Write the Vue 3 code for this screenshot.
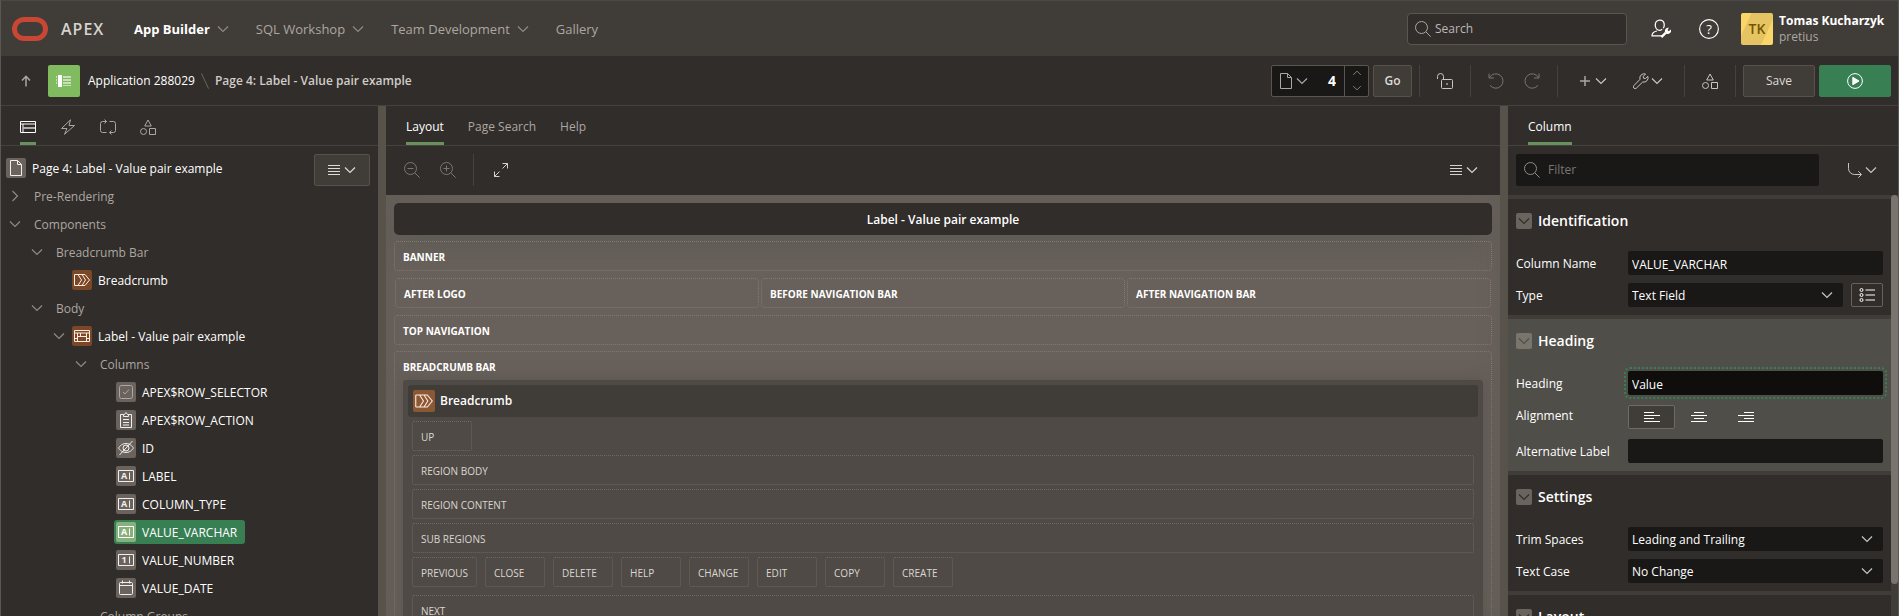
<script setup>
import { h, ref } from 'vue'

const shapes = {
  chevDown: '<path d="M3 5.500 8 10.500 13 5.500" stroke-width="1.200"/>',
  chevRight: '<path d="M5.500 3 10.500 8 5.500 13" stroke-width="1.200"/>',
  chevUp: '<path d="M3 10.500 8 5.500 13 10.500" stroke-width="1.200"/>',
  arrowUp: '<path d="M8 13.500V3.500M4 7.500l4-4.200 4 4.200" stroke-width="1.500"/>',
  layout: '<path d="M.5 2.500h15v11H.5zM.5 5h15M3 5v8.500"/><path d="M3.500 8h12v2h-12z" fill="currentColor" stroke="none" opacity=".6"/>',
  bolt: '<path d="M10.500.8 1.500 9.500h5.500L4.500 15.300 14.500 6.500H9z"/>',
  cycle: '<path d="M6.500 13.500h-4a2 2 0 0 1-2-2v-7a2 2 0 0 1 2-2h4M4.500.5l2 2-2 2M9.500 2.500h4a2 2 0 0 1 2 2v7a2 2 0 0 1-2 2h-4M11.500 11.500l-2 2 2 2"/>',
  shapes: '<path d="M8 1l3.300 6H4.700zM9.500 9.500h6v6h-6z"/><circle cx="3.500" cy="12.500" r="3"/>',
  search: '<circle cx="6.500" cy="6.500" r="6"/><path d="M11 11l4.700 4.700"/>',
  zoomOut: '<circle cx="6.500" cy="6.500" r="6"/><path d="M11 11l4.700 4.700M3.500 6.500h6"/>',
  zoomIn: '<circle cx="6.500" cy="6.500" r="6"/><path d="M11 11l4.700 4.700M3.500 6.500h6M6.500 3.500v6"/>',
  expand: '<path d="M9.500 1.500h5v5M14.500 1.500l-5 5M6.500 9.500l-5 5M1.500 9.500v5h5"/>',
  lines: '<path d="M2 3.500h12M2 6.500h12M2 9.500h12M2 12.500h12"/>',
  file: '<path d="M2.500.5h7l4 4v11h-11zM9.500.5v4h4"/>',
  lock: '<path d="M.5 6V3.500a3 3 0 0 1 6 0V6.500"/><rect x="4.500" y="6.500" width="11" height="9" rx="1"/><path d="M9.300 11h1.500" stroke-width="1.500"/>',
  undo: '<path d="M1 .5v4.500h5M1.500 4.500A7.200 7.200 0 1 1 2 12.300"/>',
  redo: '<path d="M15 .5v4.500h-5M14.500 4.500A7.200 7.200 0 1 0 14 12.300"/>',
  plus: '<path d="M8 3v10M3 8h10" stroke-width="1.500"/>',
  wrench: '<path d="M14.800 3.300l-2.300 2.200-1.900-.2-.3-2L12.600 1A4.300 4.300 0 0 0 7 6.300L.9 12.600a1.700 1.700 0 0 0 2.500 2.500L9.700 9a4.300 4.300 0 0 0 5.100-5.700z"/>',
  turn: '<path d="M1.500 1v5.500a6 6 0 0 0 6 6h6.500M11.300 9.300l3.200 3.200-3.200 3.200"/>',
  list: '<circle cx="2.500" cy="3" r="1.500"/><circle cx="2.500" cy="8" r="1.500"/><circle cx="2.500" cy="13" r="1.500"/><path d="M6.500 3H16M6.500 8H16M6.500 13H16"/>',
  left: '<path d="M0 3.500h10M0 6.500h16M0 9.500h10M0 12.500h16"/>',
  center: '<path d="M3 3.500h10M0 6.500h16M3 9.500h10M0 12.500h16"/>',
  right: '<path d="M6 3.500h10M0 6.500h16M6 9.500h10M0 12.500h16"/>',
  play: '<circle cx="8" cy="8" r="7.400"/><path d="M5.800 4.300v7.400L12 8z" fill="currentColor"/>',
  help: '<circle cx="8" cy="8" r="7.500" stroke-width=".9"/><text x="8" y="11.800" text-anchor="middle" fill="currentColor" stroke="none" font-size="10.500">?</text>',
  admin: '<path d="M9 13.500H.8c0-2.300 1.200-3.400 4-3.900M9 8.200c-.6.500-1.300.8-2 .8-2.300 0-3.600-2-3.600-4.300S4.900.8 7 .8s3.600 1.600 3.600 3.900c0 1-.3 2-.8 2.700"/><path d="M8.300 14.500l3.400-3.400" stroke-width="1.900"/><path d="M15.900 8.300l-1.700 1.400-1-.9L14.400 7a2.800 2.800 0 0 0-3 4l1 .9a2.800 2.800 0 0 0 3.500-3.600z" fill="currentColor" stroke="none"/>',
}
const treeShapes = {
  page: '<path d="M4.500 2.500h7l4 4v11h-11zM11.500 2.500v4h4"/>',
  crumb: '<path d="M2.500 4.500v11M2.500 4.500h10.500l4.500 5.500-4.500 5.500H2.500M6 4.500l3.500 5.500L6 15.500M10 4.500l3.500 5.500-3.500 5.500"/>',
  grid: '<path d="M2.500 4.500h15v11h-15zM2.500 7h15M5.500 7v8.500M5.500 10.500h9M14.500 7v8.500M8.500 7v3.500M2.500 12.500h3M14.500 12.500h3"/>',
  check: '<rect x="3.500" y="3.500" width="13" height="13" rx="2"/><path d="M7 10l2 2 4-4.500"/>',
  clip: '<path d="M7.500 4.500h-3v13h11v-13h-3M7.500 6.500v-2h1l1.500-2 1.500 2h1v2zM7 9.500h6M7 12.500h6M7 15h6"/>',
  hidden: '<path d="M2.500 10S5 5.500 10 5.500 17.500 10 17.500 10 15 14.500 10 14.500 2.500 10 2.500 10zM3.500 17 16.500 3"/><circle cx="10" cy="10" r="3"/>',
  text: '<path d="M2.500 4.500h15v11h-15zM13.500 6.500v7"/><text x="8" y="13.200" text-anchor="middle" fill="currentColor" stroke="none" font-size="9" font-weight="700">A</text>',
  number: '<path d="M2.500 4.500h15v11h-15zM13.500 6.500v7"/><text x="8" y="13.200" text-anchor="middle" fill="currentColor" stroke="none" font-size="9" font-weight="700">1</text>',
  date: '<rect x="3.500" y="4.500" width="13" height="12" rx="1"/><path d="M3.500 7.500h13M6.500 2.500v3M13.500 2.500v3"/>',
}
const svg = (box, html) => h('svg', {
  viewBox: `0 0 ${box} ${box}`, fill: 'none', stroke: 'currentColor', 'aria-hidden': 'true', innerHTML: html,
})
const Icon = (props) => svg(16, shapes[props.name])
Icon.props = ['name']
const TreeIcon = (props) => svg(20, treeShapes[props.name])
TreeIcon.props = ['name']

const nav = [
  { label: 'App Builder', menu: true, current: true },
  { label: 'SQL Workshop', menu: true },
  { label: 'Team Development', menu: true },
  { label: 'Gallery' },
]
const leftTabs = [
  { icon: 'layout', label: 'Rendering', current: true },
  { icon: 'bolt', label: 'Dynamic Actions' },
  { icon: 'cycle', label: 'Processing' },
  { icon: 'shapes', label: 'Shared Components' },
]
const tree = [
  { level: 1, label: 'Pre-Rendering', chev: 'chevRight' },
  { level: 1, label: 'Components', chev: 'chevDown' },
  { level: 2, label: 'Breadcrumb Bar', chev: 'chevDown' },
  { level: 3, label: 'Breadcrumb', icon: 'crumb', tone: 'brown' },
  { level: 2, label: 'Body', chev: 'chevDown' },
  { level: 3, label: 'Label - Value pair example', chev: 'chevDown', icon: 'grid', tone: 'brown' },
  { level: 4, label: 'Columns', chev: 'chevDown' },
  { level: 5, label: 'APEX$ROW_SELECTOR', icon: 'check', tone: 'dim' },
  { level: 5, label: 'APEX$ROW_ACTION', icon: 'clip' },
  { level: 5, label: 'ID', icon: 'hidden' },
  { level: 5, label: 'LABEL', icon: 'text' },
  { level: 5, label: 'COLUMN_TYPE', icon: 'text' },
  { level: 5, label: 'VALUE_VARCHAR', icon: 'text', selected: true },
  { level: 5, label: 'VALUE_NUMBER', icon: 'number' },
  { level: 5, label: 'VALUE_DATE', icon: 'date' },
  { level: 4, label: 'Column Groups' },
]
const bodySlots = ['REGION BODY', 'REGION CONTENT', 'SUB REGIONS']
const buttonSlots = ['PREVIOUS', 'CLOSE', 'DELETE', 'HELP', 'CHANGE', 'EDIT', 'COPY', 'CREATE']

const pageNo = ref('4')
const columnName = ref('VALUE_VARCHAR')
const heading = ref('Value')
const altLabel = ref('')
const align = ref('left')
</script>

<template>
  <div class="app">
    <header class="header">
      <a href="#" class="brand"><span class="logo"></span><span>APEX</span></a>
      <nav class="nav">
        <a v-for="n in nav" :key="n.label" href="#" :class="{ current: n.current }">
          {{ n.label }}<Icon v-if="n.menu" name="chevDown" class="i16" />
        </a>
      </nav>
      <label class="search">
        <Icon name="search" class="i16" />
        <input type="search" placeholder="Search" aria-label="Search">
      </label>
      <button class="plain admin" aria-label="Administration"><Icon name="admin" class="i20" /></button>
      <button class="plain help" aria-label="Help"><Icon name="help" class="i20" /></button>
      <button class="plain user">
        <span class="avatar">TK</span>
        <span class="who"><b>Tomas Kucharzyk</b><span>pretius</span></span>
      </button>
    </header>

    <div class="toolbar">
      <button class="plain up" aria-label="Up"><Icon name="arrowUp" class="i16" /></button>
      <a href="#" class="appicon" aria-label="Application icon">
        <svg viewBox="0 0 16 12"><path fill="#fff" d="M2 0h4v12H2z" /><path fill="#fff" opacity=".55" d="M0 1h1v2H0zM0 4h1v2H0zM0 7h1v2H0zM7 1h8v2H7zM7 4h8v2H7zM7 7h8v2H7zM7 10h8v1H7z" /></svg>
      </a>
      <a href="#" class="crumb">Application 288029</a>
      <svg class="slash" viewBox="0 0 8 16" fill="none" stroke="#6b6661"><path d="M.5.5l7 15" /></svg>
      <b class="crumb here">Page 4: Label - Value pair example</b>
      <span class="grow"></span>
      <div class="pagebox">
        <button class="plain" aria-label="Page selector"><Icon name="file" class="i16" /><Icon name="chevDown" class="i16" /></button>
        <input v-model="pageNo" aria-label="Page number">
        <span class="spin">
          <button class="plain" aria-label="Next page"><Icon name="chevUp" class="i12" /></button>
          <button class="plain" aria-label="Previous page"><Icon name="chevDown" class="i12" /></button>
        </span>
      </div>
      <button class="btn go">Go</button>
      <i class="sep"></i>
      <button class="plain tool" aria-label="Lock page"><Icon name="lock" class="i16" /></button>
      <i class="sep"></i>
      <div class="tools">
        <button class="plain off" aria-label="Undo"><Icon name="undo" class="i16" /></button>
        <button class="plain off" aria-label="Redo"><Icon name="redo" class="i16" /></button>
      </div>
      <i class="sep"></i>
      <div class="tools menus">
        <button class="plain" aria-label="Create"><Icon name="plus" class="i16 muted" /><Icon name="chevDown" class="i16" /></button>
        <button class="plain" aria-label="Utilities"><Icon name="wrench" class="i16" /><Icon name="chevDown" class="i16" /></button>
      </div>
      <i class="sep"></i>
      <button class="plain tool" aria-label="Shared Components"><Icon name="shapes" class="i16" /></button>
      <i class="sep"></i>
      <button class="btn save">Save</button>
      <button class="btn run" aria-label="Save and Run Page"><Icon name="play" class="i16" /></button>
    </div>

    <main class="main">
      <section class="panel">
        <div class="tabs icontabs">
          <button v-for="t in leftTabs" :key="t.icon" :class="{ current: t.current }" :aria-label="t.label"><Icon :name="t.icon" class="i16" /></button>
        </div>
        <div class="treewrap">
          <ul class="tree">
            <li class="root"><TreeIcon name="page" class="ticon" /><span>Page 4: Label - Value pair example</span></li>
            <li v-for="n in tree" :key="n.label" :class="'l' + n.level">
              <button v-if="n.chev" class="plain tog" :aria-label="'Toggle ' + n.label"><Icon :name="n.chev" class="i16" /></button>
              <i v-else class="tog"></i>
              <a href="#" class="node" :class="{ folder: !n.icon, selected: n.selected }"><TreeIcon v-if="n.icon" :name="n.icon" class="ticon" :class="n.tone" /><span>{{ n.label }}</span></a>
            </li>
          </ul>
          <button class="btn menu" aria-label="Tree menu"><Icon name="lines" class="i16" /><Icon name="chevDown" class="i16" /></button>
        </div>
      </section>

      <div class="splitter"></div>

      <section class="panel">
        <div class="tabs">
          <button class="current">Layout</button><button>Page Search</button><button>Help</button>
        </div>
        <div class="canvasbar">
          <button class="plain off" aria-label="Zoom out"><Icon name="zoomOut" class="i16" /></button>
          <button class="plain off" aria-label="Zoom in"><Icon name="zoomIn" class="i16" /></button>
          <i class="sep"></i>
          <button class="plain" aria-label="Expand"><Icon name="expand" class="i16" /></button>
          <span class="grow"></span>
          <button class="plain" aria-label="Layout menu"><Icon name="lines" class="i16" /><Icon name="chevDown" class="i16" /></button>
        </div>
        <div class="canvas">
          <h1>Label - Value pair example</h1>
          <div class="slot">BANNER</div>
          <div class="slotrow">
            <div class="slot">AFTER LOGO</div><div class="slot">BEFORE NAVIGATION BAR</div><div class="slot">AFTER NAVIGATION BAR</div>
          </div>
          <div class="slot">TOP NAVIGATION</div>
          <div class="slot bar">
            <span>BREADCRUMB BAR</span>
            <div class="region">
              <h2><TreeIcon name="crumb" class="ticon copper" />Breadcrumb</h2>
              <div class="cells">
                <div class="row"><div class="cell">UP</div></div>
                <div v-for="s in bodySlots" :key="s" class="cell">{{ s }}</div>
                <div class="row"><div v-for="s in buttonSlots" :key="s" class="cell">{{ s }}</div></div>
                <div class="cell next">NEXT</div>
              </div>
            </div>
          </div>
        </div>
      </section>

      <div class="splitter"></div>

      <section class="panel">
        <div class="tabs"><button class="current">Column</button></div>
        <div class="filterbar">
          <label class="filter"><Icon name="search" class="i16" /><input type="search" placeholder="Filter" aria-label="Filter"></label>
          <button class="plain" aria-label="Go to group"><Icon name="turn" class="i16" /><Icon name="chevDown" class="i16" /></button>
        </div>
        <div class="props">
          <div class="groups">
            <section class="group">
              <h3><button class="plain fold" aria-label="Collapse Identification"><Icon name="chevDown" class="i16" /></button>Identification</h3>
              <div class="field"><label for="f-name">Column Name</label><input id="f-name" v-model="columnName"></div>
              <div class="field"><label for="f-type">Type</label>
                <span class="select"><select id="f-type"><option>Text Field</option></select><Icon name="chevDown" class="i16" /></span>
                <button class="plain quick" aria-label="Quick pick"><Icon name="list" class="i16" /></button>
              </div>
            </section>
            <section class="group active">
              <h3><button class="plain fold" aria-label="Collapse Heading"><Icon name="chevDown" class="i16" /></button>Heading</h3>
              <div class="field"><label for="f-heading">Heading</label><input id="f-heading" v-model="heading" class="focused"></div>
              <div class="field aligns"><span id="f-align">Alignment</span>
                <div class="seg" role="group" aria-labelledby="f-align">
                  <button v-for="a in ['left', 'center', 'right']" :key="a" class="plain" :class="{ on: align === a }" :aria-label="a" @click="align = a"><Icon :name="a" class="i16" /></button>
                </div>
              </div>
              <div class="field"><label for="f-alt">Alternative Label</label><input id="f-alt" v-model="altLabel"></div>
            </section>
            <section class="group">
              <h3><button class="plain fold" aria-label="Collapse Settings"><Icon name="chevDown" class="i16" /></button>Settings</h3>
              <div class="field"><label for="f-trim">Trim Spaces</label>
                <span class="select"><select id="f-trim"><option>Leading and Trailing</option></select><Icon name="chevDown" class="i16" /></span></div>
              <div class="field"><label for="f-case">Text Case</label>
                <span class="select"><select id="f-case"><option>No Change</option></select><Icon name="chevDown" class="i16" /></span></div>
            </section>
            <section class="group">
              <h3><button class="plain fold" aria-label="Collapse Layout"><Icon name="chevDown" class="i16" /></button>Layout</h3>
            </section>
          </div>
          <div class="scroll"><span></span></div>
        </div>
      </section>
    </main>
  </div>
</template>

<style>
body { background: #312d2a; }
</style>

<style scoped>
* { box-sizing: border-box; }
.app {
  display: flex; flex-direction: column; height: 100vh; overflow: hidden;
  border: 1px solid #5a5855; border-top-color: #484848; border-bottom: 0;
  background: #312d2a; color: #fff; font: 12px/16px "Open Sans", "Noto Sans", sans-serif;
}
button, input, select { font: inherit; color: inherit; margin: 0; }
a { color: inherit; text-decoration: none; }
ul, h1, h2, h3 { margin: 0; padding: 0; list-style: none; }
.plain { display: flex; align-items: center; justify-content: center; padding: 0; border: 0; background: none; }
.grow { flex: 1; }
.i12, .i16, .i20 { display: block; flex: none; width: 16px; height: 16px; }
.i12 { width: 12px; height: 12px; }
.i20 { width: 20px; height: 20px; }

.header { display: flex; flex: none; align-items: center; height: 55px; padding: 0 13px 0 11px; background: #403c37; }
.brand { display: flex; align-items: center; gap: 13px; width: 122px; font-size: 16px; font-weight: 600; color: #d6d2cf; letter-spacing: 1px; }
.logo { width: 36px; height: 24px; border: 5px solid #c74634; border-radius: 12px; }
.nav { display: flex; flex: 1; gap: 25px; font-size: 13px; color: #aca7a2; }
.nav a { display: flex; align-items: center; gap: 5px; }
.nav .current { color: #fff; font-weight: 700; }
.nav svg { color: #8f8a85; }
.search { display: flex; align-items: center; gap: 4px; width: 220px; height: 32px; padding: 0 7px; border: 1px solid #5b554e; border-radius: 4px; background: #312d2a; color: #aca7a2; }
.search input, .filter input { flex: 1; min-width: 0; padding: 0; border: 0; outline: 0; background: none; }
.search input::placeholder { color: #bdb8b4; opacity: 1; }
.admin { margin-left: 24px; }
.help { margin: 0 22px 0 28px; }
.user { gap: 6px; text-align: left; }
.avatar { display: flex; align-items: center; justify-content: center; width: 32px; height: 32px; border-radius: 2px; background: linear-gradient(115deg, #fbd46a 22%, #e6c463 23% 74%, #fbd46a 75%); color: #755600; font-size: 14px; font-weight: 600; }
.who { display: flex; flex-direction: column; width: 106px; white-space: nowrap; color: #aca7a2; }
.who b { color: #fff; }

.toolbar { display: flex; flex: none; align-items: center; height: 50px; padding: 0 7px 0 17px; border-bottom: 1px solid #45413d; color: #c9c5c1; }
.up { width: 16px; margin-right: 14px; color: #aca7a2; }
.appicon { display: flex; align-items: center; justify-content: center; width: 32px; height: 32px; margin-right: 8px; border-radius: 2px; background: #81bb5f; }
.appicon svg { width: 16px; height: 12px; }
.crumb { padding-top: 1px; color: #fff; white-space: nowrap; }
.here { color: #d0ccc8; font-weight: 600; }
.slash { width: 8px; height: 16px; margin: 0 6px; }
.pagebox { display: flex; width: 98px; height: 32px; margin-right: 4px; border: 1px solid #5b554e; border-radius: 2px; background: #191816; }
.pagebox > button { width: 43px; color: #aca7a2; }
.pagebox > input { flex: 1; min-width: 0; padding: 0 8px 0 0; border: 0; outline: 0; background: none; color: #fff; font-size: 14px; font-weight: 700; text-align: right; }
.spin { display: flex; flex-direction: column; width: 24px; border-left: 1px solid #5b554e; }
.spin button { flex: 1; color: #8f8a85; }
.btn { display: flex; align-items: center; justify-content: center; height: 32px; padding: 0; border: 1px solid #575149; border-radius: 2px; background: #403c37; color: #dedad7; }
.go { width: 39px; margin-right: 7px; font-weight: 600; }
.sep { flex: none; width: 1px; height: 32px; background: #45413d; }
.tool { width: 50px; height: 32px; }
.tools { display: flex; align-items: center; justify-content: center; gap: 20px; width: 86px; }
.off { color: #7b7671; }
.muted { color: #aca7a2; }
.menus { width: 126px; gap: 24px; }
.save { width: 72px; margin: 0 4px 0 7px; }
.run { width: 72px; border-color: #387f54; background: #387f54; color: #fff; }

.main { display: grid; flex: 1; min-height: 0; grid-template-columns: 377px 8px minmax(0, 1fr) 8px 390px; }
.splitter { background: #57524a; }
.panel { display: flex; flex-direction: column; min-width: 0; min-height: 0; overflow: hidden; }
.tabs { display: flex; flex: none; gap: 24px; height: 40px; padding: 0 20px; border-bottom: 1px solid #45413d; }
.tabs button { padding: 0; border: 0; border-bottom: 3px solid transparent; border-top: 5px solid transparent; background: none; color: #aca7a2; }
.tabs .current { border-bottom-color: #69915d; color: #fff; }
.icontabs { padding: 0 19px; }

.treewrap { display: flex; align-items: flex-start; padding: 8px 8px 0 0; }
.tree { flex: 1; }
.tree li { display: flex; align-items: center; height: 28px; white-space: nowrap; }
.tree span { padding-top: 2px; }
.tree .root { padding-left: 5px; gap: 6px; }
.ticon { display: block; flex: none; width: 20px; height: 20px; border-radius: 2px; background: #6a625d; color: #f1efed; }
.dim { color: #aca7a2; }
.brown { background: #7b4729; color: #ffe9dc; }
.copper { background: #8a5835; color: #ffe9dc; }
.tog { display: flex; width: 16px; color: #8f8a85; }
.l1 { padding-left: 6px; }
.l2 { padding-left: 28px; }
.l3 { padding-left: 50px; }
.l4 { padding-left: 72px; }
.l5 { padding-left: 94px; }
.node { display: flex; align-items: center; gap: 6px; height: 24px; margin-left: 3px; padding: 0 8px 0 2px; border-radius: 3px; }
.node.folder { padding-left: 8px; color: #aca7a2; }
.node.selected { background: #387f54; }
.selected .ticon { background: #87b17c; color: #fff; }
.menu { width: 56px; }

.canvasbar { display: flex; flex: none; align-items: center; gap: 20px; height: 49px; padding: 0 20px 1px 18px; color: #d6d2cf; }
.canvasbar .sep { margin: 0 -1px 0 -3px; }
.canvas { flex: 1; min-height: 0; padding: 8px; overflow: hidden; background: #68605a; box-shadow: inset 0 0 20px #625d57; }
h1 { display: flex; align-items: center; justify-content: center; height: 32px; padding-top: 2px; border-radius: 5px; background: #312d2a; font-size: 12px; font-weight: 600; box-shadow: 0 12px 24px -4px #5c5a54; }
.slot { display: flex; align-items: center; height: 30px; margin-top: 6px; padding: 2px 8px 0; border: 1px dotted #807a74; border-radius: 4px; font-size: 10px; font-weight: 700; }
.slotrow { display: flex; gap: 2px; margin: 7px 1px; }
.slotrow .slot { flex: 1; margin: 0; }
.bar { display: block; height: auto; padding: 7px 8px 8px; }
.bar > span { display: block; height: 21px; }
.region { padding: 5px 5px 8px; border-radius: 3px; background: #4f4a45; box-shadow: 0 0 16px #5a554f; }
h2 { display: flex; align-items: center; gap: 5px; height: 32px; padding: 0 5px; border-radius: 3px; background: #403c37; font-size: 12px; font-weight: 600; }
h2 .ticon { width: 22px; height: 22px; }
.cells { display: flex; flex-direction: column; gap: 4px; padding: 4px 4px 0; color: #dad6d2; font-weight: 400; }
.row { display: flex; gap: 8px; }
.cell { display: flex; align-items: center; min-width: 60px; height: 30px; padding: 2px 8px 0; border: 1px dotted #6d6863; border-radius: 2px; }
.next { margin-top: 4px; }

.filterbar { display: flex; flex: none; align-items: center; height: 49px; padding: 0 19px 1px 8px; color: #c9c5c1; }
.filter { display: flex; align-items: center; gap: 8px; flex: 1; height: 32px; margin-right: 28px; padding: 0 8px; border-radius: 2px; background: #191816; color: #8f8a85; }
.filter input::placeholder { color: #7b7671; opacity: 1; }
.props { display: flex; flex: 1; min-height: 0; overflow: hidden; }
.groups { flex: 1; min-width: 0; }
.group { padding: 14px 8px 8px; border-top: 4px solid #403c38; }
.group.active { background: #504e48; }
h3 { display: flex; align-items: center; gap: 6px; height: 16px; margin-bottom: 22px; font-size: 14px; font-weight: 600; }
.fold { width: 16px; height: 16px; border-radius: 2px; background: #6a645f; color: #312d2a; }
.active .fold { background: #79756d; color: #504e48; }
.field { display: flex; align-items: center; height: 24px; }
.field + .field { margin-top: 8px; }
.field > label, .field > span:first-child { flex: none; width: 112px; padding-top: 2px; }
.field > input, .select select { flex: 1; width: 100%; min-width: 0; height: 24px; padding: 2px 4px 0; border: 0; border-radius: 2px; outline: 0; background: #191816; }
.field > .focused { background: #0f0e0d; outline: 2px dotted #387f54; outline-offset: 2px; }
.select { position: relative; flex: 1; display: flex; }
.select select { appearance: none; }
.select svg { position: absolute; right: 8px; top: 4px; color: #c9c5c1; pointer-events: none; }
.quick { width: 32px; height: 24px; margin-left: 8px; border: 1px solid #6a625a; border-radius: 2px; }
.field.aligns { margin: 10px 0; }
.aligns > span:first-child { padding: 0 0 2px; }
.seg { display: flex; }
.seg button { width: 47px; height: 24px; border: 1px solid transparent; border-radius: 2px; }
.seg .on { border-color: #716b65; background: #403c37; }
.scroll { width: 7px; background: #403c37; }
.scroll span { display: block; height: 389px; border-radius: 4px; background: #7a746f; }
</style>
